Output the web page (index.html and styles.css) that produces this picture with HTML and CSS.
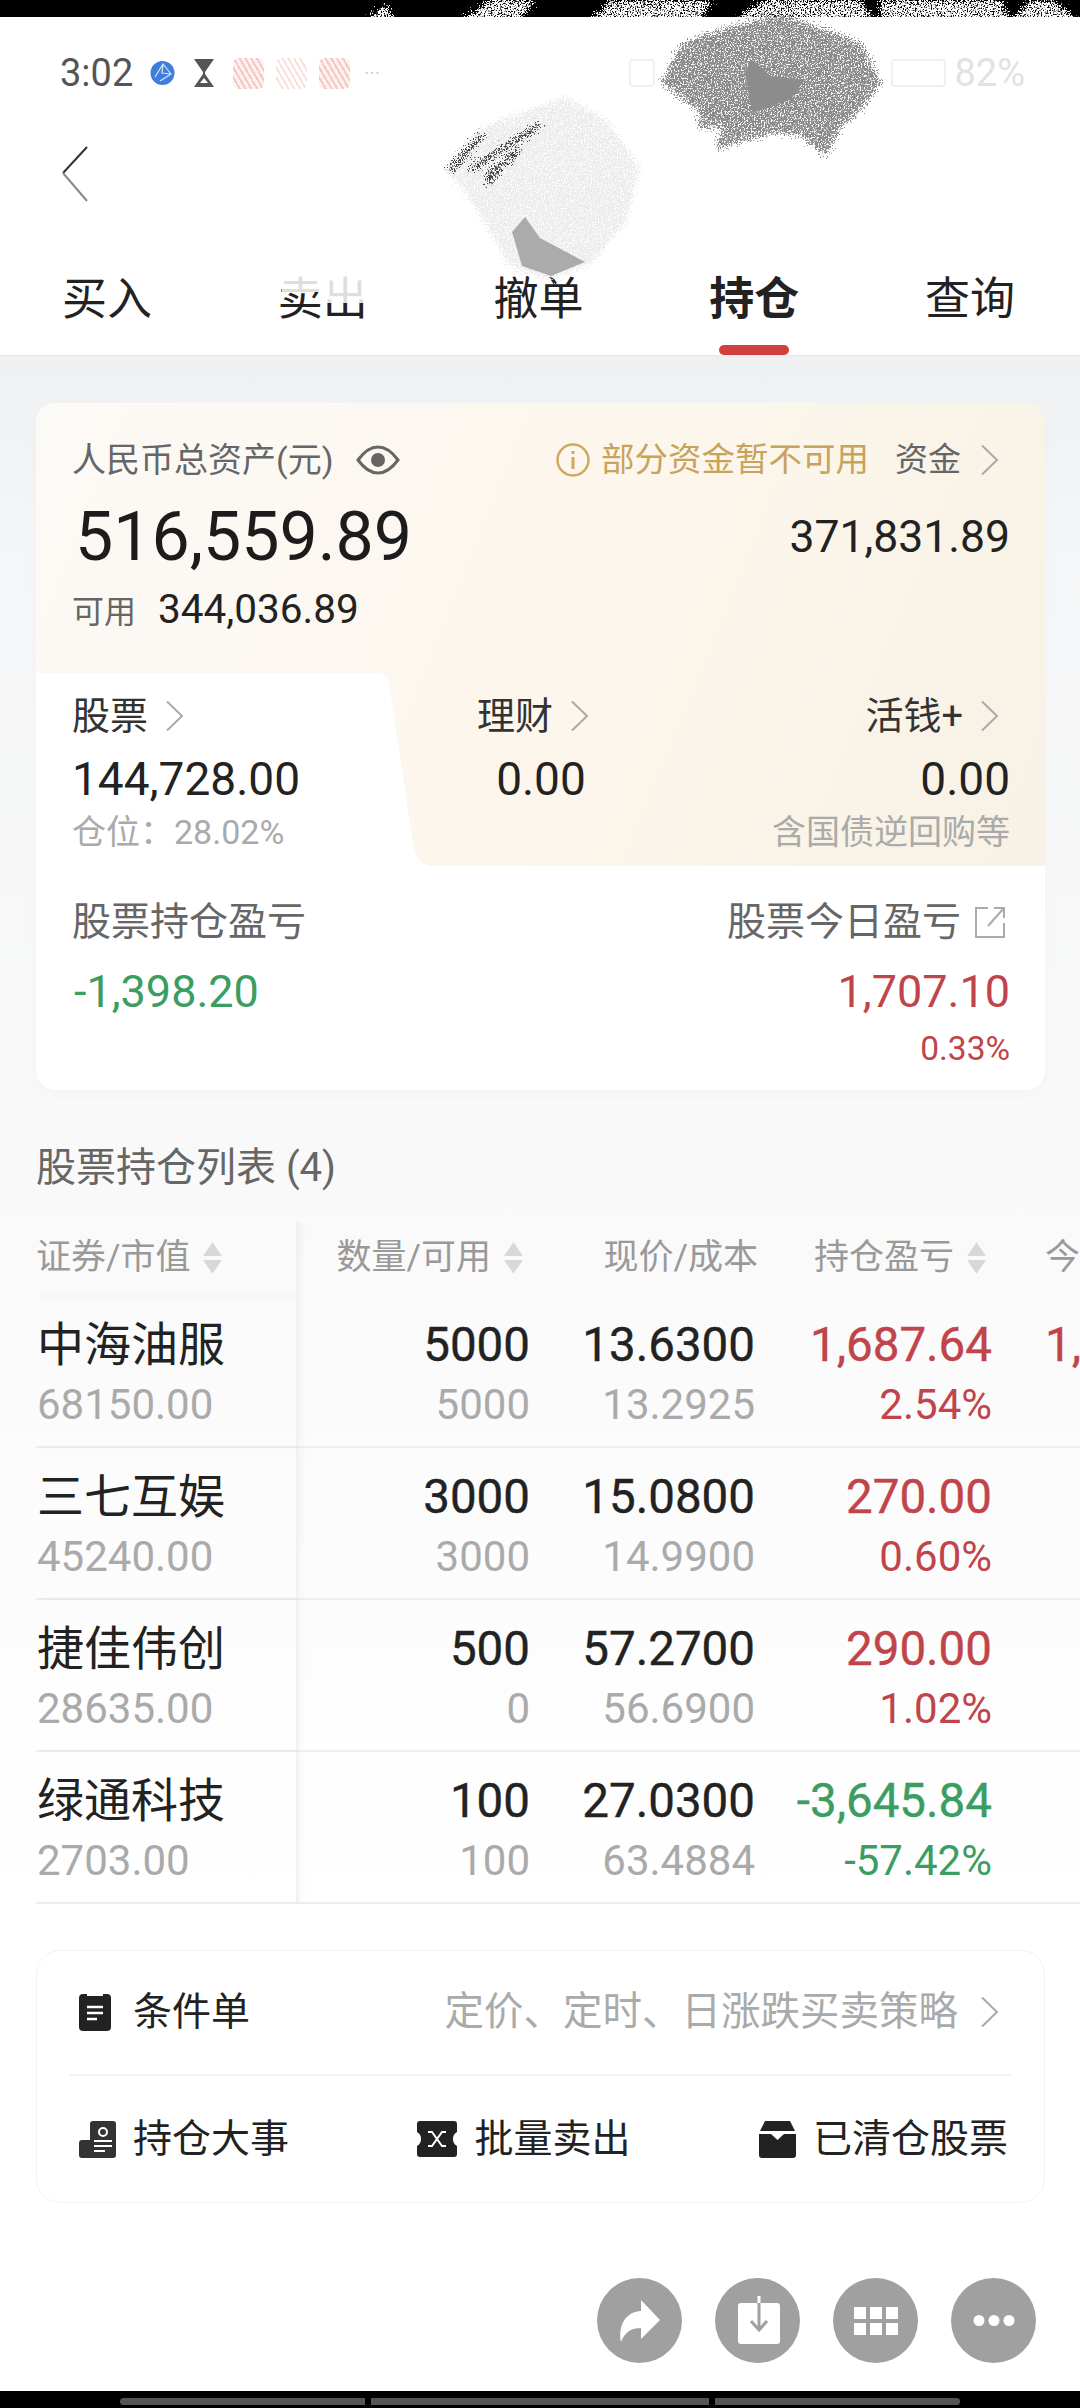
FILE: index.html
```html
<!doctype html>
<html lang="zh-CN">
<head>
    <meta charset="UTF-8">
    <meta name="viewport" content="width=device-width, initial-scale=1.0">
    <title>持仓</title>
    <link rel="stylesheet" href="styles.css">
</head>
<body>

<svg width="0" height="0" class="defs">
    <symbol id="chev" viewBox="0 0 20 32">
        <path d="M2 1.5 L17 16 L2 30.5" fill="none" stroke="currentColor" stroke-width="2"/>
    </symbol>
    <symbol id="sort" viewBox="0 0 20 30">
        <path d="M10 0 L19 13 H1 Z M1 17 H19 L10 30 Z" fill="currentColor"/>
    </symbol>
</svg>

<div class="black-top"></div>

<div id="header">
    <div class="status">
        <span class="time">3:02</span>
        <svg class="st-icon" width="25" height="26" viewBox="0 0 25 26">
            <circle cx="12.5" cy="13" r="12" fill="#3f7fdc"/>
            <path d="M5 17 L13 4 L21 14 L10 21 M13 4 L12 13 L21 14" fill="none" stroke="#d5e4fa" stroke-width="1.2"/>
        </svg>
        <svg class="st-icon" width="22" height="30" viewBox="0 0 22 30">
            <path d="M1 1 H21 L12 14 V16 L21 29 H1 L10 16 V14 Z" fill="#555"/>
            <path d="M7 25 H15 L11 20 Z" fill="#fff"/>
        </svg>
        <span class="st-blot"></span>
        <span class="st-blot st-blot-pale"></span>
        <span class="st-blot"></span>
        <span class="st-dots">•••</span>
        <span class="st-right">
            <span class="st-pale-box st-pale-small"></span>
            <span class="st-pale-box"></span>
            <span class="st-pct">82%</span>
        </span>
    </div>
    <div class="navbar">
        <svg width="30" height="56" viewBox="0 0 30 56">
            <path d="M27 1 L3 27" fill="none" stroke="#333" stroke-width="2"/>
            <path d="M3 27 L27 55" fill="none" stroke="#888" stroke-width="2"/>
        </svg>
    </div>
    <div class="tabs">
        <a class="tab">买入</a>
        <a class="tab">卖出</a>
        <a class="tab">撤单</a>
        <a class="tab active">持仓</a>
        <a class="tab">查询</a>
    </div>
</div>

<!-- 遮挡涂抹 -->
<svg class="scribble" width="1080" height="320" viewBox="0 0 1080 320">
    <defs>
        <filter id="grain" x="-10%" y="-10%" width="120%" height="120%">
            <feTurbulence type="fractalNoise" baseFrequency="0.7" numOctaves="2" seed="4" result="n"/>
            <feDisplacementMap in="SourceGraphic" in2="n" scale="22" xChannelSelector="R" yChannelSelector="G" result="d"/>
            <feColorMatrix in="n" type="matrix" values="0 0 0 0 0  0 0 0 0 0  0 0 0 0 0  0 0 0 7 -2.4" result="m"/>
            <feComposite in="d" in2="m" operator="in"/>
        </filter>
    </defs>
    <g filter="url(#grain)">
        <path d="M365 20 L385 6 L396 20 Z M462 20 L490 0 H535 L520 20 Z M590 20 L612 0 H712 L700 20 Z M735 20 L765 0 H860 L875 20 Z M880 20 L880 0 H1000 L1010 20 Z M1012 20 L1030 0 H1052 L1078 20 Z" fill="#fff"/>
        <path d="M782 15 L820 28 L861 43 L881 83 L868 100 L854 117 L842 125 L826 157 L800 135 L778 133 L760 136 L716 150 L722 128 L696 127 L700 112 L661 83 L672 62 L682 43 L735 25 Z" fill="#8a8a8a"/>
        <path d="M565 97 L606 120 L640 167 L627 220 L592 263 L551 280 L510 267 L475 207 L444 167 L482 127 Z" fill="#ececec"/>
        <path d="M450 170 L482 135 M470 170 L540 125 M485 178 L520 150 M488 185 L500 165" fill="none" stroke="#444" stroke-width="5"/>
    </g>
    <path d="M745 72 L752 112 L790 100 L805 80 L770 76 L752 60 Z" fill="#8c8c8c"/>
    <path d="M512 232 L525 217 L540 238 L585 262 L551 276 L522 266 Z" fill="#ababab"/>
    <path d="M320 272 H368 V303 H320 Z M282 272 H320 V292 H282 Z" fill="#fff" opacity=".85"/>
</svg>

<div id="main">

    <div class="card">
        <div class="assets">
            <div class="assets-top">
                <div class="line-between line-head">
                    <div class="row-inline">
                        <span class="label-sm label-total">人民币总资产(元)</span>
                        <svg class="eye" width="44" height="30" viewBox="0 0 44 30">
                            <path d="M2 15 C10 4 16 2 22 2 C28 2 34 4 42 15 C34 26 28 28 22 28 C16 28 10 26 2 15 Z" fill="none" stroke="#666" stroke-width="3"/>
                            <circle cx="22" cy="15" r="7" fill="#666"/>
                        </svg>
                    </div>
                    <div class="row-inline">
                        <svg class="info" width="34" height="36" viewBox="0 0 34 36">
                            <circle cx="17" cy="18" r="15.5" fill="none" stroke="#cfa95f" stroke-width="2.5"/>
                            <path d="M17 15 V27 M17 9 V12" stroke="#cfa95f" stroke-width="3"/>
                        </svg>
                        <span class="warn">部分资金暂不可用</span>
                        <span class="label-sm fund">资金</span>
                        <svg class="chev"><use href="#chev"/></svg>
                    </div>
                </div>
                <div class="line-between line-big">
                    <span class="total">516,559.89</span>
                    <span class="fund-num">371,831.89</span>
                </div>
                <div class="line-avail">
                    <span class="label-avail">可用</span>
                    <span class="avail-num">344,036.89</span>
                </div>
            </div>

            <div class="asset-tabs">
                <svg class="tab-shape" width="400" height="193" viewBox="0 0 400 193">
                    <path d="M0 0 H341 Q351 0 353 10 L377 170 Q381 193 397 193 H0 Z" fill="#fff"/>
                </svg>
                <div class="asset-col">
                    <div class="asset-label"><span>股票</span><svg class="chev"><use href="#chev"/></svg></div>
                    <div class="asset-num">144,728.00</div>
                    <div class="asset-sub">仓位：28.02%</div>
                </div>
                <div class="asset-col col-center">
                    <div class="asset-label label-mid"><span>理财</span><svg class="chev"><use href="#chev"/></svg></div>
                    <div class="asset-num">0.00</div>
                </div>
                <div class="asset-col col-right">
                    <div class="asset-label"><span>活钱+</span><svg class="chev"><use href="#chev"/></svg></div>
                    <div class="asset-num">0.00</div>
                    <div class="asset-sub">含国债逆回购等</div>
                </div>
            </div>
        </div>

        <div class="pnl">
            <div class="line-between">
                <span class="pnl-label">股票持仓盈亏</span>
                <div class="row-inline">
                    <span class="pnl-label">股票今日盈亏</span>
                    <svg class="ext" width="32" height="33" viewBox="0 0 32 33">
                        <path d="M14 2 H2 V31 H30 V17 M20 2 H30 V12 M30 2 L14 20" fill="none" stroke="#aaa" stroke-width="2"/>
                    </svg>
                </div>
            </div>
            <div class="line-between line-pnl">
                <span class="pnl-num green">-1,398.20</span>
                <span class="pnl-num red">1,707.10</span>
            </div>
            <div class="pnl-pct red">0.33%</div>
        </div>
    </div>

    <div class="list-title">股票持仓列表 (4)</div>

    <div class="table">
        <div class="t-head">
            <div class="th col-name">证券/市值<svg class="sort"><use href="#sort"/></svg></div>
            <div class="th th-qty">数量/可用<svg class="sort"><use href="#sort"/></svg></div>
            <div class="th th-price">现价/成本</div>
            <div class="th th-profit">持仓盈亏<svg class="sort"><use href="#sort"/></svg></div>
            <div class="th th-today">今日盈亏</div>
        </div>

        <div class="t-row">
            <div class="td col-name"><div class="name">中海油服</div><div class="sub">68150.00</div></div>
            <div class="td"><div class="val">5000</div><div class="sub">5000</div></div>
            <div class="td"><div class="val">13.6300</div><div class="sub">13.2925</div></div>
            <div class="td red"><div class="val">1,687.64</div><div class="sub">2.54%</div></div>
            <div class="td red"><div class="val">1,650.00</div></div>
        </div>

        <div class="t-row">
            <div class="td col-name"><div class="name">三七互娱</div><div class="sub">45240.00</div></div>
            <div class="td"><div class="val">3000</div><div class="sub">3000</div></div>
            <div class="td"><div class="val">15.0800</div><div class="sub">14.9900</div></div>
            <div class="td red"><div class="val">270.00</div><div class="sub">0.60%</div></div>
            <div class="td"></div>
        </div>

        <div class="t-row">
            <div class="td col-name"><div class="name">捷佳伟创</div><div class="sub">28635.00</div></div>
            <div class="td"><div class="val">500</div><div class="sub">0</div></div>
            <div class="td"><div class="val">57.2700</div><div class="sub">56.6900</div></div>
            <div class="td red"><div class="val">290.00</div><div class="sub">1.02%</div></div>
            <div class="td"></div>
        </div>

        <div class="t-row">
            <div class="td col-name"><div class="name">绿通科技</div><div class="sub">2703.00</div></div>
            <div class="td"><div class="val">100</div><div class="sub">100</div></div>
            <div class="td"><div class="val">27.0300</div><div class="sub">63.4884</div></div>
            <div class="td green"><div class="val">-3,645.84</div><div class="sub">-57.42%</div></div>
            <div class="td"></div>
        </div>
    </div>

    <div class="tools">
        <div class="tool-top">
            <div class="tool-item tool-first">
                <svg width="32" height="38" viewBox="0 0 32 38">
                    <path d="M4 1 H8 V3 H24 V1 H28 Q32 1 32 5 V34 Q32 38 28 38 H4 Q0 38 0 34 V5 Q0 1 4 1 Z" fill="#222"/>
                    <path d="M8 14 H24 M8 20 H24 M8 26 H18" stroke="#fff" stroke-width="2.5"/>
                </svg>
                <span>条件单</span>
            </div>
            <div class="tool-tip">
                <span>定价、定时、日涨跌买卖策略</span>
                <svg class="chev"><use href="#chev"/></svg>
            </div>
        </div>
        <div class="tool-bottom">
            <div class="tool-item">
                <svg width="37" height="37" viewBox="0 0 37 37">
                    <path d="M11 3 Q11 0 14 0 H34 Q37 0 37 3 V34 Q37 37 34 37 H3 Q0 37 0 34 V22 Q0 19 3 19 H11 Z" fill="#333"/>
                    <circle cx="24" cy="11" r="4" fill="none" stroke="#fff" stroke-width="2"/>
                    <path d="M15 20 H33 M15 25 H33 M15 30 H26" stroke="#fff" stroke-width="2"/>
                </svg>
                <span>持仓大事</span>
            </div>
            <div class="tool-item">
                <svg width="40" height="36" viewBox="0 0 40 36">
                    <path d="M3 0 H37 Q40 0 40 3 V11 Q36 13 36 18 Q36 23 40 25 V33 Q40 36 37 36 H3 Q0 36 0 33 V25 Q4 23 4 18 Q4 13 0 11 V3 Q0 0 3 0 Z" fill="#222"/>
                    <path d="M11 11 H15 L25 25 H29 M11 25 H15 L25 11 H29" fill="none" stroke="#fff" stroke-width="2"/>
                </svg>
                <span>批量卖出</span>
            </div>
            <div class="tool-item">
                <svg width="37" height="37" viewBox="0 0 37 37">
                    <path d="M6 0 H31 L36 10 H1 Z" fill="#222"/>
                    <path d="M0 13 H12 L18.5 19 L25 13 H37 V34 Q37 37 34 37 H3 Q0 37 0 34 Z" fill="#222"/>
                </svg>
                <span>已清仓股票</span>
            </div>
        </div>
    </div>

    <div class="fabs">
        <div class="fab">
            <svg width="85" height="85" viewBox="0 0 85 85">
                <path d="M63 42 L44 22 V33 C28 34 21 48 24 64 C28 54 34 50 44 50 V61 Z" fill="#fff"/>
            </svg>
        </div>
        <div class="fab">
            <svg width="85" height="85" viewBox="0 0 85 85">
                <rect x="23" y="25" width="42" height="41" rx="3" fill="#fff"/>
                <path d="M44 18 V25" stroke="#fff" stroke-width="3"/>
                <path d="M44 25 V52 M36 43 L44 52 L52 43" fill="none" stroke="#a0a0a0" stroke-width="3"/>
            </svg>
        </div>
        <div class="fab">
            <svg width="85" height="85" viewBox="0 0 85 85">
                <path d="M21 29 h12 v12 h-12 Z M37 29 h12 v12 h-12 Z M53 29 h12 v12 h-12 Z M21 45 h12 v12 h-12 Z M37 45 h12 v12 h-12 Z M53 45 h12 v12 h-12 Z" fill="#fff"/>
            </svg>
        </div>
        <div class="fab">
            <svg width="85" height="85" viewBox="0 0 85 85">
                <circle cx="28" cy="42.5" r="5.5" fill="#fff"/>
                <circle cx="43" cy="42.5" r="5.5" fill="#fff"/>
                <circle cx="58" cy="42.5" r="5.5" fill="#fff"/>
            </svg>
        </div>
    </div>
</div>

<div class="black-bottom">
    <span class="pill pill-l"></span>
    <span class="pill pill-m"></span>
    <span class="pill pill-r"></span>
</div>

</body>
</html>
```

FILE: styles.css
```css
*{
    margin: 0;
    padding: 0;
    box-sizing: border-box;
}
html,body{
    width: 1080px;
    height: 2408px;
    overflow: hidden;
    background: #fff;
    font-family: Roboto, "Noto Sans CJK SC", sans-serif;
    color: #222;
    position: relative;
}
.defs{
    position: absolute;
}
.black-top{
    height: 17px;
    background: #000;
}

/* 头部 */
#header{
    height: 338px;
    background: #fff;
    display: flex;
    flex-direction: column;
}
.status{
    height: 91px;
    padding: 21px 55px 0 60px;
    display: flex;
    align-items: center;
    color: #555;
}
.time{
    font-size: 38px;
    line-height: 50px;
    width: 90px;
}
.st-icon{
    margin-right: 18px;
}
.st-blot{
    width: 31px;
    height: 31px;
    margin-right: 12px;
    border-radius: 6px;
    background: repeating-linear-gradient(60deg, #f3c9c3 0 2px, #fdf0ee 2px 5px);
}
.st-blot-pale{
    background: repeating-linear-gradient(60deg, #f8e0dc 0 2px, #fff 2px 5px);
}
.st-dots{
    font-size: 10px;
    letter-spacing: 2px;
    color: #ccc;
    margin-left: 3px;
}
.st-right{
    margin-left: auto;
    display: flex;
    align-items: center;
}
.st-pale-box{
    width: 55px;
    height: 28px;
    border: 2px solid #f0f0f0;
    border-radius: 4px;
    margin-right: 8px;
}
.st-pale-small{
    width: 26px;
    margin-right: 236px;
}
.st-pct{
    font-size: 38px;
    color: #e2e2e2;
}
.navbar{
    height: 92px;
    padding: 38px 0 0 60px;
}
.tabs{
    margin-top: auto;
    display: flex;
    justify-content: space-between;
    align-items: flex-end;
    padding: 0 65px 0 62px;
}
.tab{
    display: block;
    font-size: 45px;
    line-height: 60px;
    height: 85px;
    color: #222;
}
.tab.active{
    font-weight: 700;
}
.tab.active::after{
    content: "";
    display: block;
    width: 70px;
    height: 10px;
    margin: 15px auto 0;
    background: #cf4141;
    border-radius: 5px;
}

.scribble{
    position: absolute;
    left: 0;
    top: 0;
}

/* 主体 */
#main{
    height: 2036px;
    padding-top: 47px;
    background: linear-gradient(#eef0f2 0, #f5f6f7 200px, #f9f9f9 800px, #fdfdfd 1300px, #fff 1560px);
    border-top: 1px solid #e6e7e9;
}
.card{
    margin: 0 35px 0 36px;
    background: #fff;
    border-radius: 20px;
    overflow: hidden;
    box-shadow: 0 6px 14px rgba(0,0,0,.02);
}
.assets{
    background: linear-gradient(112deg, #fcfaf7, #fcf6ec 55%, #f8f1e5);
}
.assets-top{
    padding: 37px 35px 43px 36px;
    height: 270px;
}
.line-between{
    display: flex;
    justify-content: space-between;
    align-items: center;
}
.row-inline{
    display: flex;
    align-items: center;
}
.line-head{
    height: 40px;
}
.label-sm{
    font-size: 33px;
    line-height: 40px;
    color: #666;
}
.label-total{
    font-size: 34px;
}
.eye{
    margin-left: 23px;
}
.warn{
    font-size: 33.5px;
    line-height: 40px;
    color: #c8a35c;
    margin-left: 11px;
}
.fund{
    margin-left: 26px;
}
.chev{
    width: 20px;
    height: 32px;
    color: #aaa;
    margin-left: 19px;
    margin-right: 10px;
    flex: none;
}
.line-big{
    margin-top: 17px;
    height: 80px;
}
.total{
    font-size: 68px;
    line-height: 80px;
    color: #1c1c1c;
    margin-left: 3px;
}
.fund-num{
    font-size: 44.5px;
    line-height: 50px;
    color: #222;
}
.line-avail{
    margin-top: 12px;
    height: 40px;
    display: flex;
    align-items: center;
}
.label-avail{
    font-size: 32px;
    color: #666;
}
.avail-num{
    font-size: 40.5px;
    margin-left: 22px;
    color: #222;
}

.asset-tabs{
    position: relative;
    height: 193px;
    padding: 23px 35px 0 36px;
    display: grid;
    grid-template-columns: 1fr 1fr 1fr;
}
.tab-shape{
    position: absolute;
    left: 0;
    top: 0;
}
.asset-col{
    position: relative;
}
.asset-label{
    height: 40px;
    font-size: 38px;
    line-height: 40px;
    display: flex;
    align-items: center;
    color: #333;
}
.asset-label .chev{
    margin-left: 17px;
}
.asset-num{
    margin-top: 18px;
    font-size: 46px;
    line-height: 50px;
    color: #222;
}
.asset-sub{
    margin-top: 8px;
    font-size: 34px;
    line-height: 40px;
    color: #aaa;
}
.col-center{
    text-align: center;
}
.col-center .asset-label{
    justify-content: center;
}
.label-mid{
    padding-right: 5px;
}
.col-right{
    text-align: right;
}
.col-right .asset-label{
    justify-content: flex-end;
}

.pnl{
    padding: 36px 35px 21px 36px;
}
.pnl-label{
    font-size: 39px;
    line-height: 40px;
    color: #666;
}
.ext{
    margin-left: 13px;
    margin-right: 4px;
}
.line-pnl{
    margin-top: 25px;
}
.pnl-num{
    font-size: 45px;
    line-height: 50px;
}
.pnl-num.green{
    margin-left: 2px;
}
.green{
    color: #3b9d62;
}
.red{
    color: #c0444a;
}
.pnl-pct{
    margin-top: 12px;
    font-size: 33.5px;
    line-height: 40px;
    text-align: right;
}

/* 持仓列表 */
.list-title{
    margin: 53px 0 28px 36px;
    font-size: 40px;
    line-height: 50px;
    color: #666;
}
.table{
    margin-left: 36px;
    overflow: hidden;
}
.t-head,.t-row{
    display: grid;
    grid-template-columns: 262px 232px 225px 237px 235px;
    width: 1191px;
}
.col-name{
    border-right: 2px solid #f1f1f1;
    box-shadow: 4px 0 6px rgba(0,0,0,.03);
}
.th{
    padding: 17px 0 18px;
    height: 75px;
    font-size: 35px;
    line-height: 40px;
    color: #999;
    display: flex;
    align-items: center;
    justify-content: flex-end;
}
.th.col-name{
    justify-content: flex-start;
}
.sort{
    width: 21px;
    height: 32px;
    color: #d8d8d8;
    margin-left: 12px;
    flex: none;
}
.th-qty{
    padding-right: 6px;
}
.th-price{
    margin-right: -3px;
}
.th-profit{
    padding-right: 5px;
}
.th-today{
    justify-content: flex-start;
    padding-left: 53px;
}
.t-row{
    height: 152px;
    border-bottom: 2px solid #eeeeee;
}
.td{
    padding-top: 19px;
    text-align: right;
}
.td.col-name{
    text-align: left;
    padding-left: 1px;
}
.name{
    font-size: 47px;
    line-height: 60px;
    color: #222;
}
.val{
    font-size: 47.5px;
    line-height: 60px;
    color: #222;
    -webkit-text-stroke: .4px currentColor;
}
.red .val{
    color: #c0444a;
}
.green .val{
    color: #3b9d62;
}
.sub{
    margin-top: 5px;
    font-size: 42px;
    line-height: 50px;
    color: #aaa;
}
.red .sub{
    color: #c0444a;
}
.green .sub{
    color: #3b9d62;
}

/* 底部工具 */
.tools{
    margin: 46px 35px 0 36px;
    height: 253px;
    border: 1px solid #f3f3f3;
    border-radius: 24px;
    background: #fff;
    font-size: 39px;
    line-height: 50px;
    color: #222;
}
.tool-top{
    height: 125px;
    margin: 0 33px;
    padding: 0 0 1px 9px;
    border-bottom: 2px solid #f2f2f2;
    display: flex;
    align-items: center;
    justify-content: space-between;
}
.tool-item{
    display: flex;
    align-items: center;
    gap: 17px;
}
.tool-first{
    gap: 22px;
}
.tool-tip{
    display: flex;
    align-items: center;
    color: #aaa;
    font-size: 39.5px;
}
.tool-tip .chev{
    margin-right: 11px;
    margin-left: 22px;
}
.tool-bottom{
    height: 126px;
    padding: 0 36px 0 42px;
    display: flex;
    align-items: center;
    justify-content: space-between;
}
.fabs{
    margin-top: 75px;
    padding-right: 44px;
    display: flex;
    justify-content: flex-end;
    gap: 33px;
}
.fab{
    width: 85px;
    height: 85px;
    border-radius: 50%;
    background: #a0a0a0;
}
.fab svg{
    display: block;
}

.black-bottom{
    position: absolute;
    left: 0;
    bottom: 0;
    width: 1080px;
    height: 17px;
    background: #000;
    padding: 7px 120px 3px;
    display: flex;
    gap: 6px;
}
.pill{
    height: 7px;
    background: #555;
}
.pill-l{
    width: 245px;
    border-radius: 4px 0 0 4px;
}
.pill-m{
    width: 338px;
}
.pill-r{
    width: 245px;
    border-radius: 0 4px 4px 0;
}
```
